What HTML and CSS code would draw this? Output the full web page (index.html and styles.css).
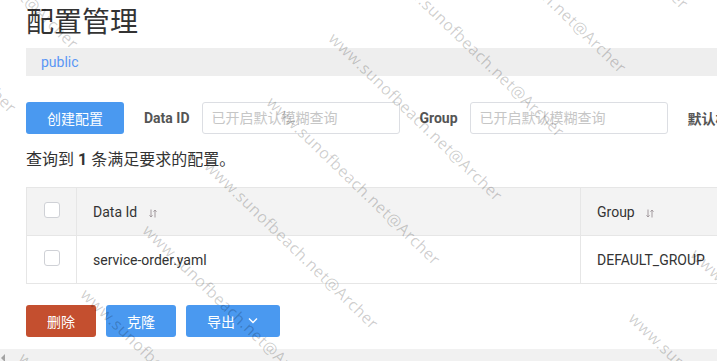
FILE: index.html
```html
<!DOCTYPE html>
<html lang="zh-CN">
<head>
    <meta charset="UTF-8">
    <meta name="viewport" content="width=device-width, initial-scale=1.0">
    <title>配置管理</title>
    <link rel="stylesheet" href="styles.css">
</head>
<body>
    <div class="page">
        <h1 class="page-title">配置管理</h1>

        <div class="namespace-bar">
            <a class="namespace-link" href="#">public</a>
        </div>

        <form class="search-bar">
            <button type="button" class="btn btn-primary">创建配置</button>
            <label class="search-label" for="dataId">Data ID</label>
            <input type="text" id="dataId" class="search-input" placeholder="已开启默认模糊查询">
            <label class="search-label" for="group">Group</label>
            <input type="text" id="group" class="search-input" placeholder="已开启默认模糊查询">
            <label class="search-label">默认模糊匹配</label>
        </form>

        <p class="query-result">查询到 <strong>1</strong> 条满足要求的配置。</p>

        <table class="config-table">
            <colgroup>
                <col class="col-check">
                <col class="col-dataid">
                <col class="col-group">
                <col class="col-app">
            </colgroup>
            <thead>
                <tr>
                    <th class="cell-check"><span class="checkbox"></span></th>
                    <th>Data Id
                        <svg class="sort-icon" width="8" height="9" viewBox="0 0 8 9">
                            <path d="M2 0.5V8M0.5 6.3L2 8L3.5 6.3M6 8.5V1M4.5 2.7L6 1L7.5 2.7" fill="none" stroke="#a29a9e" stroke-width="1"/>
                        </svg>
                    </th>
                    <th>Group
                        <svg class="sort-icon" width="8" height="9" viewBox="0 0 8 9">
                            <path d="M2 0.5V8M0.5 6.3L2 8L3.5 6.3M6 8.5V1M4.5 2.7L6 1L7.5 2.7" fill="none" stroke="#a29a9e" stroke-width="1"/>
                        </svg>
                    </th>
                    <th>归属应用</th>
                </tr>
            </thead>
            <tbody>
                <tr>
                    <td class="cell-check"><span class="checkbox"></span></td>
                    <td>service-order.yaml</td>
                    <td>DEFAULT_GROUP</td>
                    <td></td>
                </tr>
            </tbody>
        </table>

        <div class="batch-actions">
            <button type="button" class="btn btn-danger">删除</button>
            <button type="button" class="btn btn-primary">克隆</button>
            <button type="button" class="btn btn-primary">导出
                <svg class="btn-arrow" width="12" height="8" viewBox="0 0 12 8">
                    <path d="M2 1.5L6 5.5L10 1.5" fill="none" stroke="#fff" stroke-width="1.4"/>
                </svg>
            </button>
        </div>
    </div>

    <div class="scrollbar"><span class="scroll-arrow"></span></div>

    <div id="watermarks" class="watermarks"></div>

    <script>
        // 水印按斜向网格平铺
        var marks = document.getElementById("watermarks");
        for (var j = -1; j <= 1; j++) {
            for (var i = -3; i <= 7; i++) {
                var x = 400 - i * 62 + j * 300;
                var y = -35 + i * 64 + j * 280;
                if (x < -260 || x > 720 || y < -260 || y > 361) continue;
                var span = document.createElement("span");
                span.className = "watermark";
                span.textContent = "www.sunofbeach.net@Archer";
                span.style.left = x + "px";
                span.style.top = y + "px";
                marks.appendChild(span);
            }
        }
    </script>
</body>
</html>
```

FILE: styles.css
```css
body {
    margin: 0;
    font-family: Roboto, "Noto Sans CJK SC", sans-serif;
    font-size: 14px;
    color: #333;
    background-color: #fff;
    overflow: hidden;
}

.page {
    padding-left: 26px;
    white-space: nowrap;
}

.page-title {
    margin: 0;
    padding-top: 3px;
    font-size: 28px;
    line-height: 40px;
    font-weight: normal;
    color: #333;
}

.namespace-bar {
    margin-top: 5px;
    height: 28px;
    line-height: 28px;
    padding-left: 15px;
    background-color: #eee;
}

.namespace-link {
    color: #5a97f5;
    text-decoration: none;
}

/* 搜索栏 */
.search-bar {
    display: flex;
    align-items: center;
    margin: 26px 0 0;
}

.search-label {
    margin: 0 12px 0 20px;
    font-weight: bold;
    color: #555;
}

.search-input {
    box-sizing: border-box;
    width: 200px;
    height: 32px;
    padding: 0 9px;
    border: 1px solid #dcdee3;
    border-radius: 3px;
    font-family: inherit;
    font-size: 14px;
    color: #333;
    outline: none;
}

.search-input::placeholder {
    color: #c6c6c6;
}

.btn {
    display: inline-flex;
    align-items: center;
    height: 32px;
    padding: 0 21px;
    border: none;
    border-radius: 3px;
    font-family: inherit;
    font-size: 14px;
    color: #fff;
    cursor: pointer;
}

.btn-primary {
    background-color: #4a99f0;
}

.btn-danger {
    background-color: #c44f2f;
}

.btn-arrow {
    margin-left: 12px;
}

.query-result {
    margin: 16px 0 0;
    font-size: 16px;
    line-height: 20px;
    color: #333;
}

/* 配置列表 */
.config-table {
    margin-top: 17px;
    width: 954px;
    table-layout: fixed;
    border-collapse: collapse;
    border: 1px solid #e6e6e6;
}

.col-check { width: 50px; }
.col-dataid { width: 504px; }
.col-group { width: 200px; }
.col-app { width: 200px; }

.config-table th,
.config-table td {
    height: 47px;
    padding: 0 16px;
    border: 1px solid #e6e6e6;
    text-align: left;
    vertical-align: middle;
    font-weight: normal;
    color: #333;
}

.config-table th {
    background-color: #f3f3f3;
}

.config-table .cell-check {
    padding: 0;
    text-align: center;
}

.checkbox {
    display: block;
    box-sizing: border-box;
    width: 16px;
    height: 16px;
    margin: -4px auto 0;
    border: 1px solid #cfd1d6;
    border-radius: 3px;
    background-color: #fff;
}

.sort-icon {
    margin-left: 8px;
    vertical-align: -1px;
}

.batch-actions {
    display: flex;
    gap: 10px;
    margin-top: 21px;
}

/* 底部横向滚动条 */
.scrollbar {
    margin-top: 12px;
    height: 17px;
    background-color: #f1f1f1;
}

.scroll-arrow {
    display: inline-block;
    margin: 4px 0 0 1px;
    border-top: 4px solid transparent;
    border-bottom: 4px solid transparent;
    border-right: 4px solid #a3a3a3;
}

/* 水印层 */
.watermarks {
    position: absolute;
    top: 0;
    left: 0;
    width: 717px;
    height: 361px;
    overflow: hidden;
    pointer-events: none;
}

.watermark {
    position: absolute;
    font-family: "Open Sans", sans-serif;
    font-size: 16px;
    letter-spacing: 0.5px;
    line-height: 18px;
    color: rgba(0, 0, 0, 0.2);
    white-space: nowrap;
    transform: rotate(44deg);
    transform-origin: 0 0;
}
```
